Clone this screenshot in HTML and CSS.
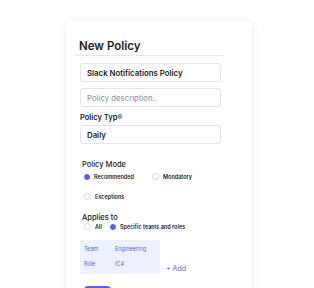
FILE: index.html
```html
<!DOCTYPE html>
<html lang="en">
<head>
    <meta charset="UTF-8">
    <meta content="width=device-width, initial-scale=1.0" name="viewport">
    <link rel="stylesheet" href="styles.css">
    <title>New Policy</title>
</head>
<body>

<div class="card">
    <h1 class="title">New Policy</h1>

    <!-- Name and description -->
    <div class="field">Slack Notifications Policy</div>
    <div class="field placeholder">Policy description..</div>

    <label class="label">Policy Typ®</label>
    <div class="field">Daily</div>

    <!-- Mode -->
    <div class="section">
        <div class="section-title">Policy Mode</div>
        <div class="radios">
            <span class="radio"><span class="dot on"></span>Recommended</span>
            <span class="radio"><span class="dot"></span>Mondatory</span>
        </div>
        <div class="radios second">
            <span class="radio"><span class="dot"></span>Exceptions</span>
        </div>
    </div>

    <!-- Scope -->
    <div class="section scope">
        <div class="section-title">Applies to</div>
        <div class="radios tight">
            <span class="radio"><span class="dot"></span>All</span>
            <span class="radio"><span class="dot on"></span>Specific teams and roles</span>
        </div>
        <div class="rules">
            <div class="rule-box">
                <span>Team</span><span>Engineering</span>
                <span>Role</span><span>IC4</span>
            </div>
            <span class="add">+ Add</span>
        </div>
        <div class="save"></div>
    </div>
</div>

</body>
</html>
```

FILE: styles.css
```css
body {
    margin: 0;
    height: 100vh;
    overflow: hidden;
    background: #ffffff;
    font-family: Inter, "Open Sans", sans-serif;
    color: #1c1c22;
}

.card {
    width: 158px;
    height: 280px;
    margin: 21px 0 0 66px;
    padding: 18px 14px 0 14px;
    border-radius: 6px;
    background: #ffffff;
    box-shadow: 0 1px 10px rgba(0, 0, 0, 0.09);
}

.title {
    width: 144px;
    margin: 0 0 7px -5px;
    padding: 0 0 2px 4px;
    font-size: 11.5px;
    line-height: 14px;
    font-weight: 600;
    border-bottom: 1px solid #e4e6ec;
}

.field {
    display: flex;
    align-items: center;
    box-sizing: border-box;
    width: 141px;
    height: 19px;
    margin-bottom: 6px;
    padding: 0 6px;
    border: 1px solid #e3e5ea;
    border-radius: 3px;
    font-size: 7.8px;
    font-weight: 600;
}

.placeholder {
    font-weight: 400;
    color: #8a8d96;
}

.label {
    display: block;
    margin: 3px 0 3px 0;
    font-size: 7.5px;
    font-weight: 600;
}

.section {
    margin: 16px 0 0 2px;
}

.section-title {
    font-size: 7.5px;
    font-weight: 500;
    margin-bottom: 4px;
}

.radios {
    display: flex;
    gap: 18px;
    padding-left: 2px;
}

.radios.second {
    margin-top: 13px;
}

.radios.tight {
    gap: 8px;
}

.radio {
    display: flex;
    align-items: center;
    gap: 4px;
    font-size: 5.5px;
    font-weight: 600;
}

.dot {
    width: 7px;
    height: 7px;
    box-sizing: border-box;
    border-radius: 50%;
    border: 1px solid #d8dae0;
}

.dot.on {
    width: 6px;
    height: 6px;
    background: #5a5ff0;
    border-color: #5a5ff0;
}

.scope {
    margin-top: 13px;
}

.scope .section-title {
    margin-bottom: 1px;
}

.rules {
    display: flex;
    align-items: flex-end;
    gap: 6px;
    margin: 10px 0 0 -2px;
}

.rule-box {
    display: grid;
    grid-template-columns: 31px auto;
    grid-auto-rows: 7px;
    align-items: center;
    row-gap: 8px;
    width: 76px;
    padding: 5px 0 7px 4px;
    background: #eef1fd;
    font-size: 5.5px;
    color: #5667d8;
}

.add {
    margin-bottom: 1px;
    font-size: 7px;
    color: #5667d8;
}

.save {
    width: 27px;
    height: 8px;
    margin: 12px 0 0 2px;
    border-radius: 4px;
    background: #5a5ff0;
}
```
